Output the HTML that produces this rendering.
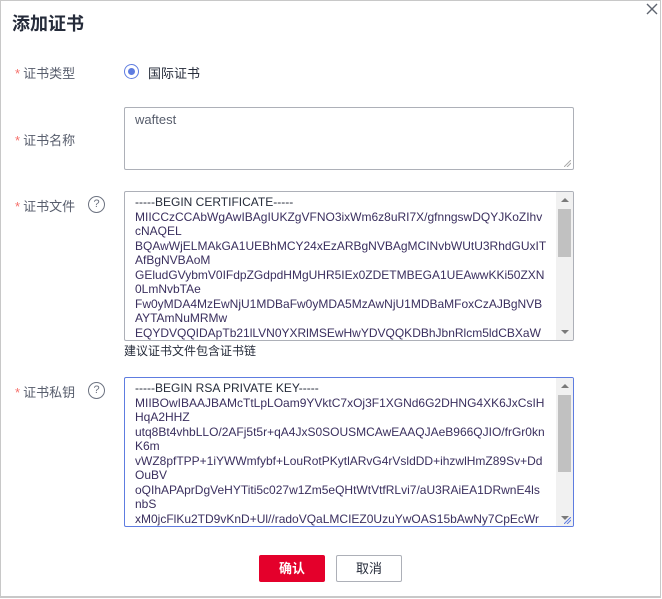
<!DOCTYPE html>
<html><head><meta charset="utf-8"><style>
*{margin:0;padding:0;box-sizing:border-box}
body{width:662px;height:599px;overflow:hidden;background:#fff;font-family:"Liberation Sans","Noto Sans CJK SC",sans-serif;position:relative}
.frame{position:absolute;left:0;top:0;width:661px;height:598px;border:1px solid #c8c8c8;border-bottom-width:2px}
.t{position:absolute;left:12px;top:10px;font-size:18px;font-weight:bold;color:#252b3a}
.lab{position:absolute;left:15px;font-size:13px;color:#575d6c}
.lab b{color:#f66f6a;font-weight:normal;margin-right:3px}
.q{position:absolute;left:88px;width:17px;height:17px;border:1.3px solid #6c7280;border-radius:50%;font-size:11px;line-height:14px;text-align:center;color:#6c7280}
.ta{position:absolute;left:124px;width:450px;border:1px solid #adb0b8;border-radius:2px;font-size:12px;color:#3a2f5e;line-height:14.5px;padding:3px 20px 0 10px;overflow:hidden;background:#fff;white-space:nowrap}
.ta .h{color:#252b3a}
.sb{position:absolute;right:0;top:0;bottom:0;width:17px;background:#f1f1f1}
.sb .th{position:absolute;left:2px;right:2px;background:#c1c1c1}
.sb .u,.sb .d{position:absolute;left:5px;width:0;height:0;border-left:4px solid transparent;border-right:4px solid transparent}
.sb .u{top:6px;border-bottom:4px solid #7a7a7a}
.sb .d{bottom:6px;border-top:4px solid #7a7a7a}
.btn{position:absolute;top:555px;height:27px;width:66px;font-size:13px;text-align:center;line-height:25px;border-radius:2px}
</style></head><body>
<div class="frame"></div>
<div class="t">添加证书</div>
<svg style="position:absolute;left:646px;top:3px" width="12" height="12" viewBox="0 0 12 12"><path d="M1 1L11 11M11 1L1 11" stroke="#5e6470" stroke-width="1.4"/></svg>

<div class="lab" style="top:63px"><b>*</b>证书类型</div>
<div style="position:absolute;left:124px;top:64px;width:15px;height:15px;border:1px solid #5e7ce0;border-radius:50%"><div style="position:absolute;left:3px;top:3px;width:7px;height:7px;border-radius:50%;background:#5e7ce0"></div></div>
<div style="position:absolute;left:148px;top:63px;font-size:13px;color:#252b3a">国际证书</div>

<div class="lab" style="top:130px"><b>*</b>证书名称</div>
<div class="ta" style="top:107px;height:63px;color:#575d6c;padding-top:5px;font-size:13px">waftest
<svg style="position:absolute;right:2px;bottom:2px" width="7" height="7"><path d="M7 0L0 7M7 3L3 7" stroke="#aaa"/></svg></div>

<div class="lab" style="top:196px"><b>*</b>证书文件</div>
<div class="q" style="top:196px">?</div>
<div class="ta" style="top:191px;height:150px"><span class="h">-----BEGIN CERTIFICATE-----</span><br>MIICCzCCAbWgAwIBAgIUKZgVFNO3ixWm6z8uRI7X/gfnngswDQYJKoZIhv<br>cNAQEL<br>BQAwWjELMAkGA1UEBhMCY24xEzARBgNVBAgMCINvbWUtU3RhdGUxIT<br>AfBgNVBAoM<br>GEludGVybmV0IFdpZGdpdHMgUHR5IEx0ZDETMBEGA1UEAwwKKi50ZXN<br>0LmNvbTAe<br>Fw0yMDA4MzEwNjU1MDBaFw0yMDA5MzAwNjU1MDBaMFoxCzAJBgNVB<br>AYTAmNuMRMw<br>EQYDVQQIDApTb21lLVN0YXRlMSEwHwYDVQQKDBhJbnRlcm5ldCBXaW
<div class="sb"><div class="u"></div><div class="th" style="top:17px;height:48px"></div><div class="d"></div></div></div>
<div style="position:absolute;left:124px;top:342px;font-size:12px;color:#252b3a">建议证书文件包含证书链</div>

<div class="lab" style="top:382px"><b>*</b>证书私钥</div>
<div class="q" style="top:382px">?</div>
<div class="ta" style="top:377px;height:150px;border-color:#5e7ce0"><span class="h">-----BEGIN RSA PRIVATE KEY-----</span><br>MIIBOwIBAAJBAMcTtLpLOam9YVktC7xOj3F1XGNd6G2DHNG4XK6JxCsIH<br>HqA2HHZ<br>utq8Bt4vhbLLO/2AFj5t5r+qA4JxS0SOUSMCAwEAAQJAeB966QJIO/frGr0kn<br>K6m<br>vWZ8pfTPP+1iYWWmfybf+LouRotPKytlARvG4rVsldDD+ihzwlHmZ89Sv+Dd<br>OuBV<br>oQIhAPAprDgVeHYTiti5c027w1Zm5eQHtWtVtfRLvi7/aU3RAiEA1DRwnE4ls<br>nbS<br>xM0jcFlKu2TD9vKnD+Ul//radoVQaLMCIEZ0UzuYwOAS15bAwNy7CpEcWr
<div class="sb"><div class="u"></div><div class="th" style="top:17px;height:77px"></div><div class="d"></div></div>
<svg style="position:absolute;right:2px;bottom:2px" width="7" height="7"><path d="M7 0L0 7M7 3L3 7" stroke="#5e7ce0"/></svg></div>

<div class="btn" style="left:259px;background:#e4002b;color:#fff;font-weight:bold;border:1px solid #e4002b">确认</div>
<div class="btn" style="left:336px;background:#fff;color:#252b3a;border:1px solid #adb0b8">取消</div>
</body></html>
